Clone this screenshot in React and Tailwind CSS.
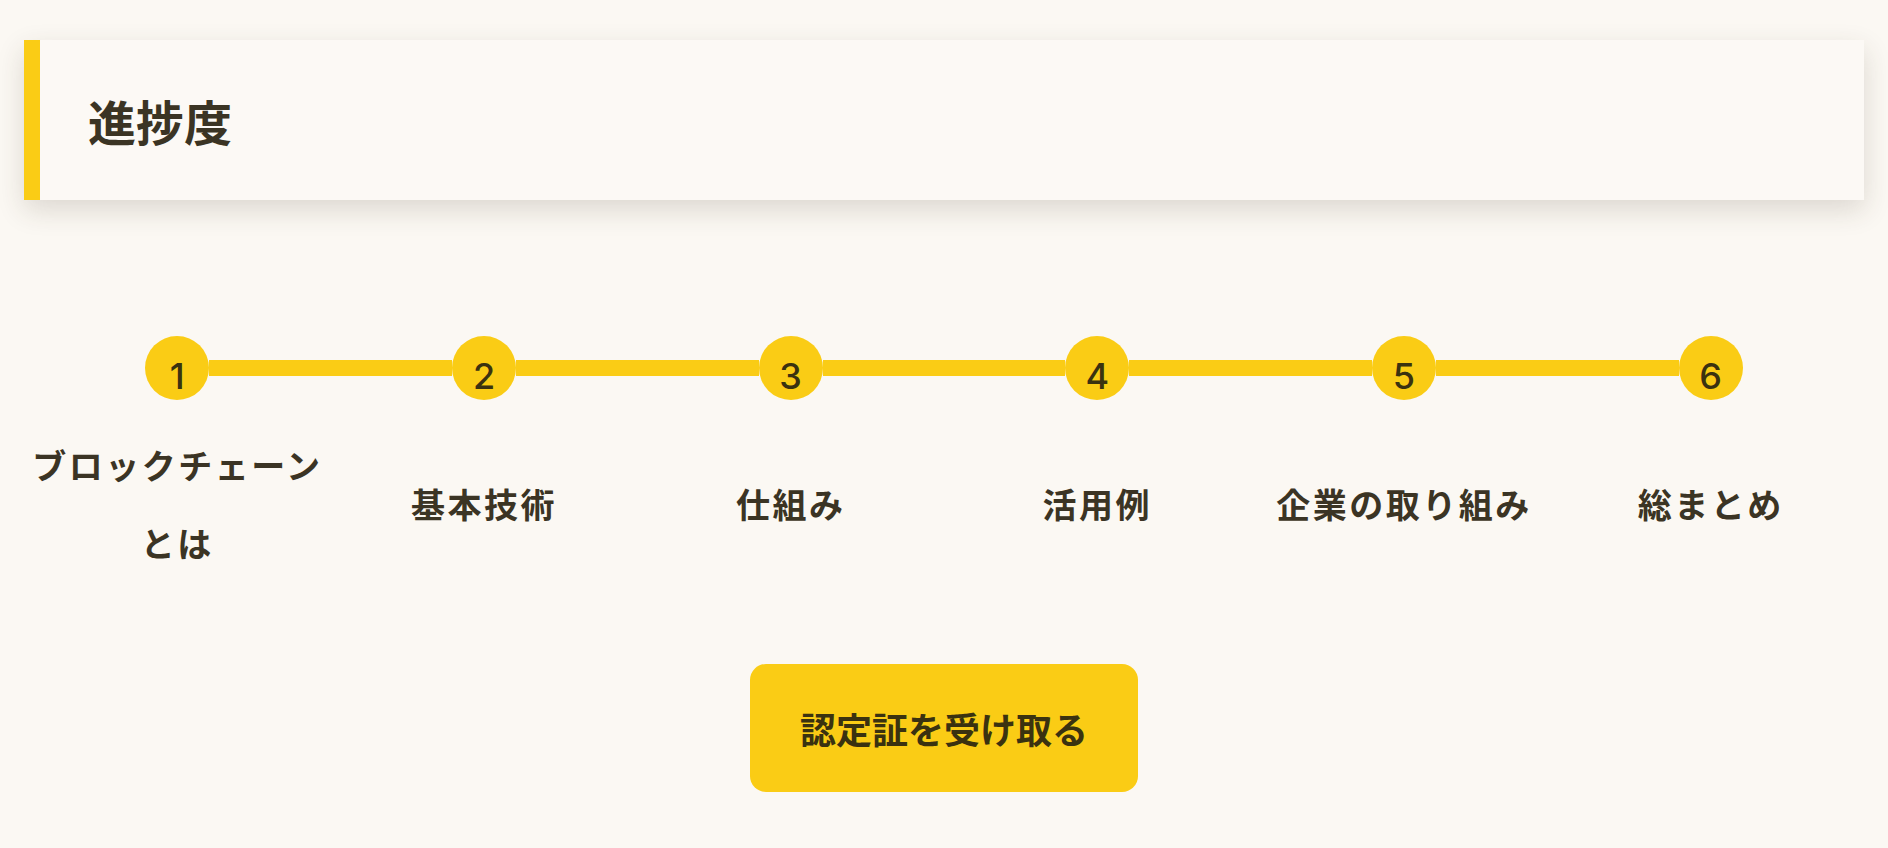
import React from "react"

const steps = [
  { no: 1, label: "ブロックチェーンとは" },
  { no: 2, label: "基本技術" },
  { no: 3, label: "仕組み" },
  { no: 4, label: "活用例" },
  { no: 5, label: "企業の取り組み" },
  { no: 6, label: "総まとめ" },
]

const App = () => {
  return (
    <div className="min-h-screen bg-[#fbf8f3] px-6 pt-10 pb-14 font-['Noto_Sans_CJK_JP','Noto_Sans',sans-serif] text-[#3b3424]">
      {/* 見出しカード */}
      <div className="flex h-[160px] items-center border-l-[16px] border-[#facc15] bg-[#fcf9f5] pl-12 shadow-[0_10px_26px_rgba(60,50,30,0.16)]">
        <h2 className="text-[48px] font-bold leading-none">進捗度</h2>
      </div>

      {/* ステップ */}
      <div className="mt-[136px] grid grid-cols-6">
        {steps.map((s, i) => (
          <div key={s.no} className="flex items-center">
            <div className={`h-4 flex-1 ${i === 0 ? "bg-transparent" : "bg-[#facc15]"}`} />
            <div className="flex h-16 w-16 shrink-0 items-center justify-center rounded-full bg-[#facc15] pt-4 font-['Inter',sans-serif] text-[36px] font-medium leading-none text-[#3a3210]">
              {s.no}
            </div>
            <div className={`h-4 flex-1 ${i === steps.length - 1 ? "bg-transparent" : "bg-[#facc15]"}`} />
          </div>
        ))}
      </div>

      <div className="grid h-[208px] grid-cols-6 items-center">
        {steps.map((s) => (
          <p key={s.no} className="text-center text-[34px] font-bold leading-[78px] tracking-[2.5px]">
            {s.label}
          </p>
        ))}
      </div>

      {/* ボタン */}
      <div className="mt-14 flex justify-center">
        <button className="h-32 w-[388px] rounded-2xl bg-[#facc15] text-[36px] font-bold tracking-normal text-[#3a3210]">
          認定証を受け取る
        </button>
      </div>
    </div>
  )
}

export default App
